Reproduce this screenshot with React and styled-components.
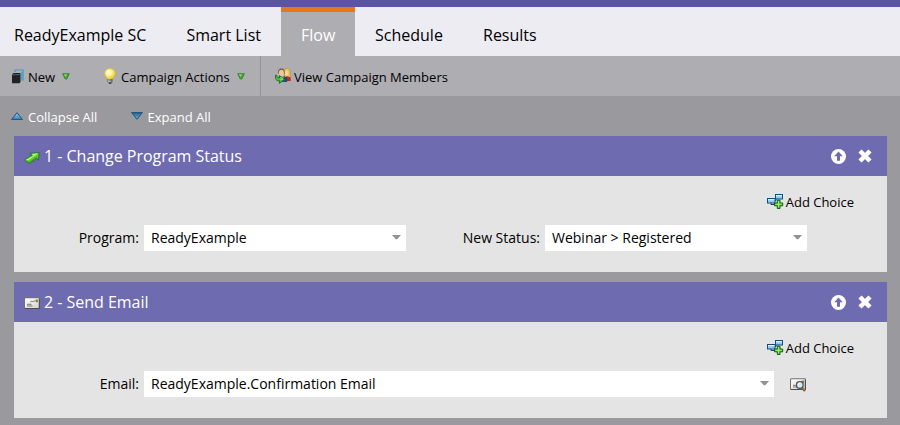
import React from "react";
import styled, { createGlobalStyle } from "styled-components";

const Global = createGlobalStyle`
  * { box-sizing: border-box; }
  body { margin: 0; background: #9a999e; overflow: hidden; }
`;

const Page = styled.div`
  width: 900px;
  height: 425px;
  overflow: hidden;
  background: #9a999e;
  font-family: "Open Sans", "Noto Sans", sans-serif;
  font-size: 13px;
  color: #000;
  white-space: nowrap;
`;

const TopStripe = styled.div`
  height: 7px;
  background: #5a54a4;
`;

const Tabs = styled.nav`
  display: flex;
  height: 49px;
  padding-left: 14px;
  background: #edecf3;
`;

const Tab = styled.div`
  width: ${(p) => p.$width}px;
  padding-left: ${(p) => p.$left ?? 20}px;
  border-top: 5px solid ${(p) => (p.$active ? "#e8761b" : "transparent")};
  background: ${(p) => (p.$active ? "#aeadb2" : "transparent")};
  color: ${(p) => (p.$active ? "#fff" : "#000")};
  font-size: 16px;
  line-height: 46px;
`;

const Toolbar = styled.div`
  display: flex;
  height: 40px;
  background: #aeadb2;
`;

const ToolItem = styled.div`
  display: flex;
  align-items: center;
  width: ${(p) => p.$width}px;
  padding-left: ${(p) => p.$left}px;
  border-right: ${(p) => (p.$divided ? "1px solid #949398" : "0")};
  line-height: 18px;

  span { padding: 2px 0 0 ${(p) => p.$gap}px; }
  .caret { margin-left: 7px; }
`;

const Toggles = styled.div`
  display: flex;
  height: 40px;
  padding-left: 11px;
  color: #fff;
`;

const Toggle = styled.div`
  display: flex;
  align-items: center;
  width: 119.6px;
  gap: 5px;

  span { padding-top: 2px; line-height: 18px; }
`;

const Steps = styled.main`
  display: grid;
  gap: 10px;
  padding: 0 13px 0 14px;
`;

const Step = styled.section`
  height: 136px;
  background: #e4e4e4;
`;

const StepHeader = styled.header`
  display: flex;
  align-items: center;
  height: 40px;
  padding: 0 15px 0 10px;
  background: #6f6bb0;
  color: #fff;

  > svg:first-child { margin-top: 3px; }
`;

const StepTitle = styled.h2`
  flex: 1;
  margin: 0;
  padding-left: 4px;
  font-size: 16px;
  font-weight: 400;
  line-height: 40px;
  letter-spacing: -0.02px;
`;

const HeaderActions = styled.div`
  display: flex;
  align-items: center;
  gap: 12px;
`;

const AddChoice = styled.div`
  display: flex;
  align-items: center;
  justify-content: flex-end;
  height: 20px;
  margin-top: 16px;
  padding-right: 33px;
  gap: 2px;

  svg { margin-top: -2px; }
`;

const Fields = styled.div`
  display: flex;
  align-items: center;
  height: 26px;
  margin-top: 13px;
  font-size: 14px;
`;

const Label = styled.label`
  width: ${(p) => p.$width}px;
  padding: 0 5px 2px 0;
  text-align: right;
`;

const Select = styled.div`
  display: flex;
  align-items: center;
  justify-content: space-between;
  width: ${(p) => p.$width}px;
  height: 26px;
  padding: 0 5px 2px 7px;
  background: #fff;
`;

const Preview = styled.div`
  display: flex;
  margin-left: 16px;
`;

const CopyIcon = () => (
  <svg width="12" height="15" viewBox="0 0 12 15">
    <path d="M3 3V1H11V11H9.2" fill="none" stroke="#4397cc" strokeWidth="1.2" />
    <path d="M9 3H11V11H9Z" fill="#4fa2d4" />
    <path d="M0 5.5L1.5 4H8.5V13L7.5 14.3H0Z" fill="#202326" />
    <path d="M.5 5.7H7.3L8.3 4.5" fill="none" stroke="#777c80" strokeWidth=".7" />
  </svg>
);

const GreenCaret = () => (
  <svg className="caret" width="8" height="7" viewBox="0 0 8 7">
    <path d="M.7.7H7.3L4.8 6H3.2Z" fill="#45aa2c" stroke="#3d7c37" strokeWidth=".9" />
    <path d="M1.8 1.3H5.2L3.6 3.9Z" fill="#8bd46e" />
  </svg>
);

const BulbIcon = () => (
  <svg width="12" height="16" viewBox="0 0 12 16">
    <defs>
      <radialGradient id="bulb" cx=".38" cy=".36" r=".65">
        <stop stopColor="#fffff2" /><stop offset=".45" stopColor="#fff38a" /><stop offset="1" stopColor="#e9c62e" />
      </radialGradient>
    </defs>
    <path d="M6 .5C2.8.5.6 2.8.6 5.6C.6 8.2 2.8 9.1 3.5 11.3H8.5C9.2 9.1 11.4 8.2 11.4 5.6C11.4 2.8 9.2.5 6 .5Z" fill="url(#bulb)" stroke="#d9b544" strokeWidth=".8" />
    <path d="M3.3 11H8.7V14L7 15.8H5L3.3 14Z" fill="#6e7175" />
    <path d="M4 12H6.5M4 13.6H6.5" stroke="#d2d4d6" strokeWidth=".8" />
    <path d="M5 15.2H7.2" stroke="#2b2d30" />
  </svg>
);

const MembersIcon = () => (
  <svg width="16" height="16" viewBox="0 0 16 16">
    <path d="M9.3 5C9 1.7 10.3.4 12.2.4C15.1.4 15.4 3 15.1 9H10Z" fill="#edc65b" stroke="#b88c2d" strokeWidth=".6" />
    <ellipse cx="11.6" cy="5" rx="1.6" ry="2.7" fill="#f7d6a2" />
    <path d="M9 9.5L12 8.2L15.7 9.5V13H10Z" fill="#bc2925" />
    <path d="M3.1 5.5C2.8 1.9 4.2.5 6.4.5C9 .5 10 2.5 9.4 6.2Z" fill="#765338" />
    <ellipse cx="6.4" cy="5.1" rx="2.6" ry="3.4" fill="#efc897" />
    <path d="M3 9L5.5 8L7.2 9.5L8.8 8L12.2 10V14H4Z" fill="#244d78" />
    <path d="M5.8 8.2L7.2 9.5L8.4 8.2V12H6Z" fill="#eef0e9" />
    <path d="M.5 7.2V10.3C.5 12 2 12.8 4.5 12.8V15.4L9.6 11.2L4.5 7.6V9.8C2.8 9.8 1.7 9 1.7 7.2Z" fill="#50bd35" stroke="#226e22" strokeWidth=".9" />
    <path d="M5.4 9.4L8 11.1L5.4 11.4" fill="none" stroke="#a1e47c" strokeWidth=".8" />
  </svg>
);

const BlueTriangle = ({ down }) => (
  <svg width="12" height="8" viewBox="0 0 12 8">
    <defs>
      <linearGradient id={down ? "blueDown" : "blueUp"} x2="0" y2="1">
        <stop stopColor={down ? "#285f8c" : "#8ecbec"} /><stop offset="1" stopColor={down ? "#61b5e8" : "#3289c3"} />
      </linearGradient>
    </defs>
    <path d={down ? "M.6.6H11.4L6 7.3Z" : "M.6 7.4H11.4L6 .7Z"} fill={down ? "url(#blueDown)" : "url(#blueUp)"} stroke="#174c75" strokeWidth=".9" />
  </svg>
);

const StatusArrow = () => (
  <svg width="16" height="14" viewBox="0 0 16 14">
    <path d="M5.8 2.4L15.2 1.5L14.4 9.3L12.4 7.6L6 12.3H4.7L1.1 9.6V8.3L8.1 4.2Z" fill="#5cce32" stroke="#246b24" strokeWidth=".8" />
    <path d="M7.5 2.9L14.3 2.2L10.5 5.1L4 9.4L2 8.8L9.6 4.4Z" fill="#b4f37f" />
    <path d="M2 10L5.2 11.5L12.2 6.8L13.8 8" fill="none" stroke="#2f9528" />
  </svg>
);

const Envelope = ({ search }) => (
  <svg width="16" height="15" viewBox="0 0 16 15">
    <defs>
      <linearGradient id={search ? "paperSearch" : "paper"} x2="1" y2="1">
        <stop stopColor="#fff" /><stop offset="1" stopColor="#d3d1ca" />
      </linearGradient>
    </defs>
    <rect x=".6" y="1.9" width="14.8" height="10.6" rx=".7" fill={search ? "url(#paperSearch)" : "url(#paper)"} stroke="#72736f" strokeWidth="1.2" />
    <path d="M1.5 11.5V2.8H14.4" fill="none" stroke="#fff" strokeWidth=".7" />
    <path d="M.8 12.5H15.4V3" fill="none" stroke="#4f504e" />
    <rect x="11.5" y="3.5" width="2.5" height="2.7" fill="#898449" />
    <path d="M6.3 6C7.5 4.2 8.7 6.7 11 4.7M3 8.3H7.5M3 10H8.5" fill="none" stroke="#777" />
    {search && <>
      <path d="M12 10.5L15 14" stroke="#7b5629" strokeWidth="2.2" />
      <path d="M12.5 10.7L14.7 13.2" stroke="#e1b15c" strokeWidth=".8" />
      <circle cx="9.8" cy="8" r="3.3" fill="#d5ebf0" stroke="#4d565b" strokeWidth="1.3" />
      <path d="M8 7.6C8.4 6.3 9.3 6 10.4 6" fill="none" stroke="#fff" />
    </>}
  </svg>
);

const MoveUp = () => (
  <svg width="15" height="15" viewBox="0 0 15 15">
    <circle cx="7.5" cy="7.5" r="7.5" fill="#fff" />
    <path d="M7.5 2.5L11.8 7.2H9V11.7H6V7.2H3.2Z" fill="#6f6bb0" />
  </svg>
);

const Remove = () => (
  <svg width="14" height="14" viewBox="0 0 14 14">
    <path d="M2 2L12 12M12 2L2 12" stroke="#fff" strokeWidth="4.5" />
  </svg>
);

const ChoiceIcon = () => (
  <svg width="17" height="15" viewBox="0 0 17 15">
    <path d="M7.5 6.5H9V4.5M4 9V10.5H8" fill="none" stroke="#153f65" />
    <rect x=".5" y="4.5" width="7.5" height="4.5" fill="#8ec9ee" stroke="#174c76" />
    <rect x="8.5" y=".5" width="7" height="4.5" fill="#8ec9ee" stroke="#174c76" />
    <path d="M1 5.6H7.5M9 1.6H15" stroke="#d6f1fe" strokeWidth="1.2" />
    <path d="M10.3 6.1H13V9H15.7V11.8H13V14.5H10.3V11.8H7.5V9H10.3Z" fill="#4fc62e" stroke="#165f1b" />
    <path d="M11.6 7V13.5M8.5 10.3H14.7" stroke="#a4ed74" />
  </svg>
);

const SelectCaret = () => (
  <svg width="9" height="5" viewBox="0 0 9 5"><path d="M0 0H9L5.2 4.3H3.8Z" fill="#929292" /></svg>
);

function FlowStep({ icon, title, children }) {
  return (
    <Step>
      <StepHeader>
        {icon}
        <StepTitle>{title}</StepTitle>
        <HeaderActions><MoveUp /><Remove /></HeaderActions>
      </StepHeader>
      <AddChoice><ChoiceIcon /><span>Add Choice</span></AddChoice>
      <Fields>{children}</Fields>
    </Step>
  );
}

export default function App() {
  return (
    <>
      <Global />
      <Page>
        <TopStripe />
        <Tabs>
          <Tab $left={0} $width={153}>ReadyExample SC</Tab>
          <Tab $left={19.4} $width={114}>Smart List</Tab>
          <Tab $active $width={74}>Flow</Tab>
          <Tab $width={108}>Schedule</Tab>
          <Tab $width={94}>Results</Tab>
        </Tabs>
        <Toolbar>
          <ToolItem $width={92} $left={12} $gap={4}><CopyIcon /><span>New</span><GreenCaret /></ToolItem>
          <ToolItem $width={169} $left={12} $gap={5} $divided><BulbIcon /><span>Campaign Actions</span><GreenCaret /></ToolItem>
          <ToolItem $width={220} $left={14} $gap={3}><MembersIcon /><span>View Campaign Members</span></ToolItem>
        </Toolbar>
        <Toggles>
          <Toggle><BlueTriangle /><span>Collapse All</span></Toggle>
          <Toggle><BlueTriangle down /><span>Expand All</span></Toggle>
        </Toggles>
        <Steps>
          <FlowStep icon={<StatusArrow />} title="1 - Change Program Status">
            <Label $width={130}>Program:</Label>
            <Select $width={262}>ReadyExample<SelectCaret /></Select>
            <Label $width={139}>New Status:</Label>
            <Select $width={262}>Webinar &gt; Registered<SelectCaret /></Select>
          </FlowStep>
          <FlowStep icon={<Envelope />} title="2 - Send Email">
            <Label $width={130}>Email:</Label>
            <Select $width={630}>ReadyExample.Confirmation Email<SelectCaret /></Select>
            <Preview><Envelope search /></Preview>
          </FlowStep>
        </Steps>
      </Page>
    </>
  );
}
